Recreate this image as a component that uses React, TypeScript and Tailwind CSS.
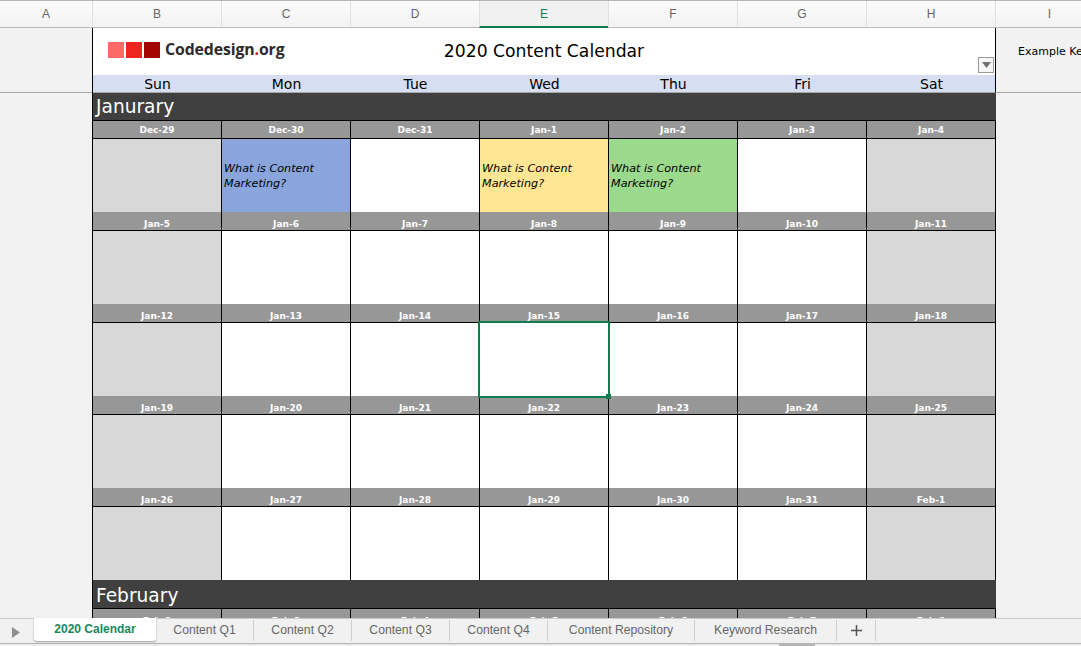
const cols = ["B", "C", "D", "E", "F", "G", "H"];
const days = ["Sun", "Mon", "Tue", "Wed", "Thu", "Fri", "Sat"];

const weeks = [
  ["Dec-29", "Dec-30", "Dec-31", "Jan-1", "Jan-2", "Jan-3", "Jan-4"],
  ["Jan-5", "Jan-6", "Jan-7", "Jan-8", "Jan-9", "Jan-10", "Jan-11"],
  ["Jan-12", "Jan-13", "Jan-14", "Jan-15", "Jan-16", "Jan-17", "Jan-18"],
  ["Jan-19", "Jan-20", "Jan-21", "Jan-22", "Jan-23", "Jan-24", "Jan-25"],
  ["Jan-26", "Jan-27", "Jan-28", "Jan-29", "Jan-30", "Jan-31", "Feb-1"],
];
const febDates = ["Feb-2", "Feb-3", "Feb-4", "Feb-5", "Feb-6", "Feb-7", "Feb-8"];

const tabs = ["Content Q1", "Content Q2", "Content Q3", "Content Q4", "Content Repository", "Keyword Research"];
const tabWidths = ["w-[98px]", "w-[98px]", "w-[98px]", "w-[98px]", "w-[147px]", "w-[142px]"];

const posts: Record<string, string> = {
  "Dec-30": "bg-[#8aa5dc]",
  "Jan-1": "bg-[#ffe694]",
  "Jan-2": "bg-[#9bd98c]",
};

function DateRow({ dates, first }: { dates: string[]; first?: boolean }) {
  return (
    <div className={`grid grid-cols-[repeat(7,129px)] border-b border-black bg-[#979797] shrink-0 overflow-hidden ${first ? "h-[18px]" : "h-[19px]"}`}>
      {dates.map((d) => (
        <div key={d} className={`border-r border-black text-center text-white font-bold text-[9px] font-['DejaVu_Sans',sans-serif] ${first ? "leading-[19px]" : "leading-[24px]"}`}>
          {d}
        </div>
      ))}
    </div>
  );
}

function Week({ dates, first }: { dates: string[]; first?: boolean }) {
  return (
    <>
      <DateRow dates={dates} first={first} />
      <div className="grid grid-cols-[repeat(7,129px)] h-[73px] shrink-0">
        {dates.map((d, i) => {
          const weekend = i === 0 || i === 6;
          const post = posts[d];
          const selected = d === "Jan-15";
          return (
            <div key={d} className={`relative border-r border-black flex items-center ${post ? post : weekend ? "bg-[#d8d8d8]" : "bg-white"}`}>
              {post && (
                <p className="px-[2px] pt-[1px] italic text-[11.2px] leading-[15px] text-black font-['DejaVu_Sans',sans-serif]">
                  What is Content Marketing?
                </p>
              )}
              {selected && (
                <div className="absolute z-10 -left-[2px] -top-[2px] w-[132px] h-[77px] border-2 border-[#107c50]">
                  <div className="absolute -right-[3px] -bottom-[3px] w-[5px] h-[5px] bg-[#107c50]" />
                </div>
              )}
            </div>
          );
        })}
      </div>
    </>
  );
}

function MonthBar({ name, tall }: { name: string; tall?: boolean }) {
  return (
    <div className={`shrink-0 bg-[#404040] border-b border-black pl-[3px] text-white text-[18.6px] font-['DejaVu_Sans',sans-serif] ${tall ? "h-[29px] leading-[31px]" : "h-[28px] leading-[28px]"}`}>
      {name}
    </div>
  );
}

export default function App() {
  return (
    <div className="w-[1081px] h-[646px] flex flex-col overflow-hidden bg-[#f2f2f2] font-['Liberation_Sans',sans-serif]">
      {/* column letters */}
      <div className="flex h-[28px] shrink-0 border-t border-b border-t-[#b5b5b5] border-b-[#bcbcbc] bg-gradient-to-b from-[#fbfbfb] to-[#f3f3f3] text-[12px] text-[#666]">
        <div className="w-[92px] text-center leading-[26px]">A</div>
        {cols.map((c) => (
          <div
            key={c}
            className={`w-[129px] text-center leading-[26px] border-l border-[#e0e0e0] ${c === "E" ? "bg-[#f1f1f1] text-[#107c50] border-b-2 border-b-[#107c50] h-[27px]" : ""}`}
          >
            {c}
          </div>
        ))}
        <div className="flex-1 text-center leading-[26px] border-l border-[#e0e0e0] pl-[22px]">I</div>
      </div>

      <div className="flex flex-1 min-h-0">
        {/* row gutter */}
        <div className="w-[92px] shrink-0">
          <div className="h-[65px] border-b border-[#a8a8a8]" />
        </div>

        {/* sheet */}
        <div className="w-[904px] shrink-0 border-l border-black flex flex-col overflow-hidden">
          <div className="relative h-[47px] shrink-0 bg-white border-r border-black flex items-center">
            <div className="flex items-center gap-[2px] ml-[15px] mt-[-4px]">
              <span className="w-[16px] h-[16px] bg-[#fb6a66]" />
              <span className="w-[16px] h-[16px] bg-[#ee2420]" />
              <span className="w-[16px] h-[16px] bg-[#a30503]" />
              <span className="ml-[3px] text-[15.8px] font-bold text-[#2b2b2b] font-['Open_Sans',sans-serif] tracking-[-0.1px]">
                Codedesign<span className="text-[#c0201c]">.</span>org
              </span>
            </div>
            <div className="absolute left-0 right-0 top-[11px] text-center text-[17.2px] leading-[24px] text-black font-['DejaVu_Sans',sans-serif]">
              2020 Content Calendar
            </div>
            <div className="absolute right-[1px] bottom-[2px] w-[16px] h-[16px] bg-[#f6f6f6] border border-[#9a9a9a] flex items-center justify-center">
              <svg width="9" height="6" viewBox="0 0 9 6">
                <path d="M0 0h9L4.5 6z" fill="#6f6f6f" />
              </svg>
            </div>
          </div>
          <div className="grid grid-cols-[repeat(7,129px)] h-[18px] shrink-0 bg-[#d6dff2] border-b border-[#a8a8a8] border-r border-r-black text-center text-[14px] leading-[18px] text-black font-['DejaVu_Sans',sans-serif]">
            {days.map((d) => (
              <div key={d}>{d}</div>
            ))}
          </div>
          <MonthBar name="Janurary" />
          {weeks.map((w, i) => (
            <Week key={w[0]} dates={w} first={i === 0} />
          ))}
          <MonthBar name="February" tall />
          <DateRow dates={febDates} />
        </div>

        {/* column I */}
        <div className="flex-1 min-w-0 overflow-hidden">
          <div className="h-[65px] border-b border-[#a8a8a8] pl-[22px] pt-[16px] whitespace-nowrap text-[11px] text-black font-['DejaVu_Sans',sans-serif]">
            Example Key
          </div>
        </div>
      </div>

      {/* sheet tabs */}
      <div className="h-[28px] shrink-0 flex border-t border-[#c9c9c9] bg-[#f1f1f1] relative z-10">
        <div className="w-[34px] flex items-center justify-center pr-[3px]">
          <svg width="8" height="11" viewBox="0 0 8 11">
            <path d="M0 0L8 5.5L0 11z" fill="#8f8f8f" />
          </svg>
        </div>
        <div className="w-[122px] h-[23px] -mt-[1px] bg-white rounded-b-[3px] shadow-[0_1px_2px_rgba(0,0,0,0.35)] text-center text-[12px] leading-[22px] font-bold text-[#168a5b]">
          2020 Calendar
        </div>
        {tabs.map((t, i) => (
          <div key={t} className={`${tabWidths[i]} h-[21px] mt-[1px] border-r border-[#cfcfcf] text-center text-[12.2px] leading-[20px] text-[#666]`}>
            {t}
          </div>
        ))}
        <div className="w-[39px] h-[21px] mt-[1px] border-r border-[#cfcfcf] flex items-center justify-center">
          <svg width="11" height="11" viewBox="0 0 11 11">
            <path d="M5.5 0v11M0 5.5h11" stroke="#555" strokeWidth="1.5" />
          </svg>
        </div>
        <div className="absolute left-0 right-0 bottom-0 h-[3px] border-t border-[#b5b5b5] bg-[#ececec]">
          <div className="absolute left-[779px] top-0 w-[36px] h-[2px] bg-[#b5b5b5]" />
        </div>
      </div>
    </div>
  );
}
